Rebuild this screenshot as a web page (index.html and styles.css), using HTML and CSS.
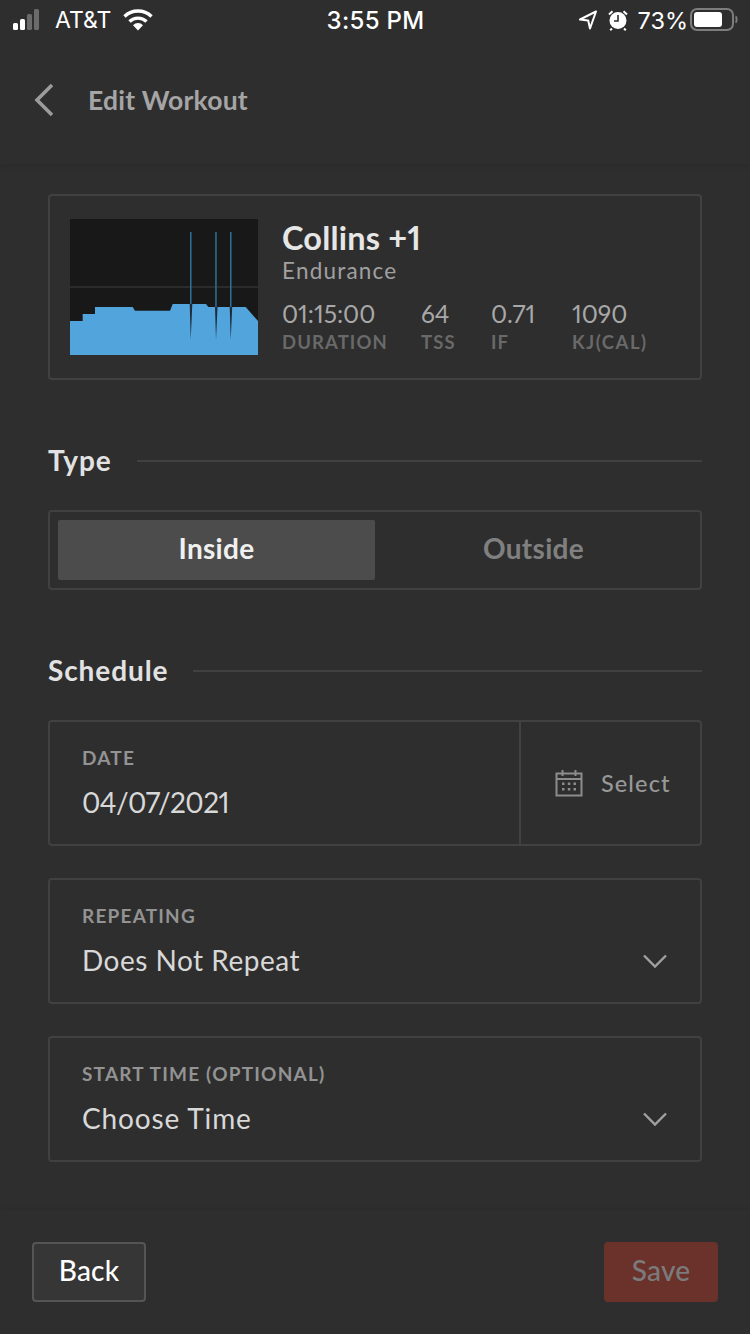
FILE: index.html
```html
<!DOCTYPE html>
<html lang="en">
<head>
<meta charset="utf-8">
<title>Edit Workout</title>
<link rel="stylesheet" href="styles.css">
</head>
<body>
<div class="page">
  <header class="top">
    <div class="status">
      <div class="status-left">
        <svg class="signal" width="34" height="22" viewBox="0 0 34 22"><rect x="0" y="14" width="5" height="7" rx="1.5" fill="#fff"/><rect x="7" y="10" width="5" height="11" rx="1.5" fill="#fff"/><rect x="14" y="5" width="5" height="16" rx="1.5" fill="#6b6b6b"/><rect x="21" y="0" width="5" height="21" rx="1.5" fill="#6b6b6b"/></svg>
        <span>AT&amp;T</span>
        <svg class="wifi" width="30" height="22" viewBox="0 0 30 22"><path d="M1.5 7.5a19.500 19.500 0 0 1 27 0" fill="none" stroke="#fff" stroke-width="3.400"/><path d="M6.500 12.500a12.300 12.300 0 0 1 17 0" fill="none" stroke="#fff" stroke-width="3.400"/><path d="M10 16.200a7 7 0 0 1 10 0L15 21.500z" fill="#fff"/></svg>
      </div>
      <div class="status-time">3:55 PM</div>
      <div class="status-right">
        <svg class="icon-loc" width="20" height="22" viewBox="0 0 20 22"><path d="M18 2.500 2 10.500l8.200 1 1.800 8z" fill="none" stroke="#fff" stroke-width="2" stroke-linejoin="round"/></svg>
        <svg class="icon-alarm" width="20" height="22" viewBox="0 0 20 22"><circle cx="10" cy="11.500" r="8.500" fill="#fff"/><path d="M10 6v6H6" fill="none" stroke="#2e2e2e" stroke-width="1.600"/><path d="M1 5.500 4.500 2.200M19 5.500 15.500 2.200M4 19.500l-1.800 1.800M16 19.500l1.800 1.800" stroke="#fff" stroke-width="2"/></svg>
        <span class="status-pct">73%</span>
        <svg width="48" height="24" viewBox="0 0 48 24"><rect x="1" y="1" width="42" height="21" rx="6" fill="none" stroke="#7d7d7d" stroke-width="2"/><rect x="4" y="4" width="28" height="15" rx="3" fill="#fff"/><path d="M45.500 8.500c1.500.6 1.500 5.400 0 6" fill="none" stroke="#7d7d7d" stroke-width="2"/></svg>
      </div>
    </div>
    <div class="nav">
      <svg class="nav-back" width="22" height="34" viewBox="0 0 22 34"><path d="M19 2 4 17l15 15" fill="none" stroke="#9b9b9b" stroke-width="3.600"/></svg>
      <h1 class="nav-title">Edit Workout</h1>
    </div>
  </header>

  <main class="main">
    <section class="card workout">
      <svg class="chart" width="188" height="136" viewBox="0 0 188 136">
        <rect width="188" height="136" fill="#181818"/>
        <rect y="67" width="188" height="2" fill="#2b2b2b"/>
        <path d="M0 102H12.700V95H25V88H62.700L65 91.700H100L102.700 85H136L138.300 88H175.700L188 102V136H0z" fill="#52a4dc"/>
        <path d="M119.700 85 120.700 121 122.300 85zM145 88 146 121 147.500 88zM159.700 88 160.700 121 162.200 88z" fill="#1d2c38"/>
        <path d="M120 13h1.500v72H120zM145.200 13h1.500v75h-1.500zM160 13h1.500v75H160z" fill="#2f7099"/>
      </svg>
      <div class="workout-info">
        <h2 class="workout-name">Collins +1</h2>
        <div class="workout-kind">Endurance</div>
        <div class="stats">
          <div class="stat stat-duration"><div class="stat-value">01:15:00</div><div class="stat-label">DURATION</div></div>
          <div class="stat stat-tss"><div class="stat-value">64</div><div class="stat-label">TSS</div></div>
          <div class="stat stat-if"><div class="stat-value">0.71</div><div class="stat-label">IF</div></div>
          <div class="stat"><div class="stat-value">1090</div><div class="stat-label stat-label-wide">KJ(CAL)</div></div>
        </div>
      </div>
    </section>

    <div class="section-head section-type"><h3>Type</h3><span class="rule"></span></div>
    <div class="card toggle">
      <div class="toggle-item toggle-on">Inside</div>
      <div class="toggle-item">Outside</div>
    </div>

    <div class="section-head section-schedule"><h3>Schedule</h3><span class="rule"></span></div>
    <div class="fields">
      <div class="card field field-date">
        <div class="field-main">
          <div class="field-label">DATE</div>
          <div class="field-value field-value-num">04/07/2021</div>
        </div>
        <div class="field-select">
          <svg width="28" height="28" viewBox="0 0 28 28"><path d="M1.500 4.500h25v22h-25zM1.500 10h25" fill="none" stroke="#8c8c8c" stroke-width="2"/><path d="M7.500 1v6M20.500 1v6" stroke="#8c8c8c" stroke-width="2"/><path d="M7 13.500h2.500v2.500H7zM12.800 13.500h2.500v2.500h-2.500zM18.500 13.500H21v2.500h-2.500zM7 19h2.500v2.500H7zM12.800 19h2.500v2.500h-2.500zM18.500 19H21v2.500h-2.500z" fill="#8c8c8c"/></svg>
          <span>Select</span>
        </div>
      </div>
      <div class="card field">
        <div class="field-main">
          <div class="field-label">REPEATING</div>
          <div class="field-value">Does Not Repeat</div>
        </div>
        <svg class="chev" width="26" height="16" viewBox="0 0 26 16"><path d="M2 2.500 13 13.500 24 2.500" fill="none" stroke="#a0a0a0" stroke-width="2.400"/></svg>
      </div>
      <div class="card field">
        <div class="field-main">
          <div class="field-label">START TIME (OPTIONAL)</div>
          <div class="field-value field-value-wide">Choose Time</div>
        </div>
        <svg class="chev" width="26" height="16" viewBox="0 0 26 16"><path d="M2 2.500 13 13.500 24 2.500" fill="none" stroke="#a0a0a0" stroke-width="2.400"/></svg>
      </div>
    </div>
  </main>

  <footer class="footer">
    <button class="btn btn-back" type="button">Back</button>
    <button class="btn btn-save" type="button">Save</button>
  </footer>
</div>
</body>
</html>
```
FILE: styles.css
```css
* { box-sizing: border-box; }
html, body { margin: 0; padding: 0; }
body { background: #2e2e2e; font-family: "Lato", "Liberation Sans", sans-serif; font-variant-numeric: proportional-nums; }
h1, h2, h3 { margin: 0; font-weight: 700; }
svg { display: block; flex: none; }

.page { width: 750px; height: 1334px; display: flex; flex-direction: column; background: #2e2e2e; overflow: hidden; }

.top { height: 164px; flex: none; background: #2e2e2e; box-shadow: 0 1px 6px rgba(0,0,0,.12); position: relative; }
.status { height: 40px; padding: 0 12px 0 13px; display: grid; grid-template-columns: 1fr auto 1fr; align-items: center; color: #fff; font-family: "Inter", sans-serif; font-size: 23px; }
.status-left { display: flex; align-items: center; }
.signal { margin-right: 8px; }
.wifi { margin-left: 12px; }
.status-time { font-size: 24px; font-weight: 500; letter-spacing: .3px; }
.status-right { display: flex; align-items: center; justify-content: flex-end; }
.icon-alarm { margin-left: 10px; }
.status-pct { margin-left: 10px; margin-right: 2px; font-size: 23.500px; }

.nav { height: 124px; padding: 0 32px 4px 33px; display: flex; align-items: center; gap: 33px; }
.nav-title { font-size: 26.500px; color: #a5a5a5; letter-spacing: .2px; }

.main { flex: 1; padding: 30px 48px 0; display: flex; flex-direction: column; }
.card { border: 2px solid #414141; border-radius: 4px; background: #2e2e2e; }

.workout { height: 186px; padding: 23px 20px; display: flex; gap: 24px; }
.workout-info { display: flex; flex-direction: column; }
.workout-name { font-size: 32.500px; line-height: 38px; color: #e6e6e6; letter-spacing: .2px; }
.workout-kind { font-size: 22.500px; line-height: 28px; color: #a0a0a0; letter-spacing: 1.200px; }
.stats { display: flex; margin-top: 15px; }
.stat-duration { width: 139px; }
.stat-tss { width: 70px; }
.stat-if { width: 81px; }
.stat-value { font-size: 24.500px; line-height: 28px; color: #a8a8a8; }
.stat-label { font-size: 18.500px; line-height: 24px; margin-top: 2px; font-weight: 700; color: #696969; letter-spacing: 1.100px; }
.stat-label-wide { letter-spacing: 1.500px; }

.section-head { display: flex; align-items: center; gap: 25px; height: 30px; }
.section-head h3 { font-size: 28px; color: #e2e2e2; letter-spacing: .9px; position: relative; top: -1px; }
.rule { flex: 1; height: 2px; background: #414141; }
.section-type { margin-top: 66px; margin-bottom: 34px; }
.section-schedule { margin-top: 66px; margin-bottom: 34px; }

.toggle { height: 80px; padding: 8px; display: flex; }
.toggle-item { flex: 1; display: flex; align-items: center; justify-content: center; padding-bottom: 5px; font-size: 28px; font-weight: 700; color: #808080; border-radius: 2px; letter-spacing: .3px; }
.toggle-on { background: #4c4c4c; color: #f0f0f0; }

.fields { display: flex; flex-direction: column; gap: 32px; }
.field { height: 126px; display: flex; align-items: flex-start; padding: 24px 32px 0; }
.field-main { flex: 1; min-width: 0; }
.field-label { font-size: 19px; line-height: 24px; font-weight: 700; color: #939393; letter-spacing: 1.200px; }
.field-value { font-size: 28px; line-height: 36px; margin-top: 14px; color: #d8d8d8; letter-spacing: .5px; }
.field-value-num { letter-spacing: -.6px; }
.field-value-wide { letter-spacing: .85px; }
.field-date { padding: 24px 0 0 32px; }
.field-select { width: 181px; height: 122px; margin-top: -24px; border-left: 2px solid #414141; display: flex; align-items: center; gap: 18px; padding-left: 34px; font-size: 23.500px; font-weight: 500; color: #989898; letter-spacing: 1.100px; }
.chev { margin-top: 49px; }

.footer { height: 124px; flex: none; padding: 32px; display: flex; justify-content: space-between; box-shadow: 0 -1px 6px rgba(0,0,0,.1); }
.btn { width: 114px; height: 60px; border-radius: 4px; font-family: inherit; font-size: 28px; font-weight: 500; padding: 0 0 5px; letter-spacing: .2px; }
.btn-back { background: #363636; border: 2px solid #555; color: #fff; }
.btn-save { background: #6b322b; border: 0; color: #7b7b7b; }
```
